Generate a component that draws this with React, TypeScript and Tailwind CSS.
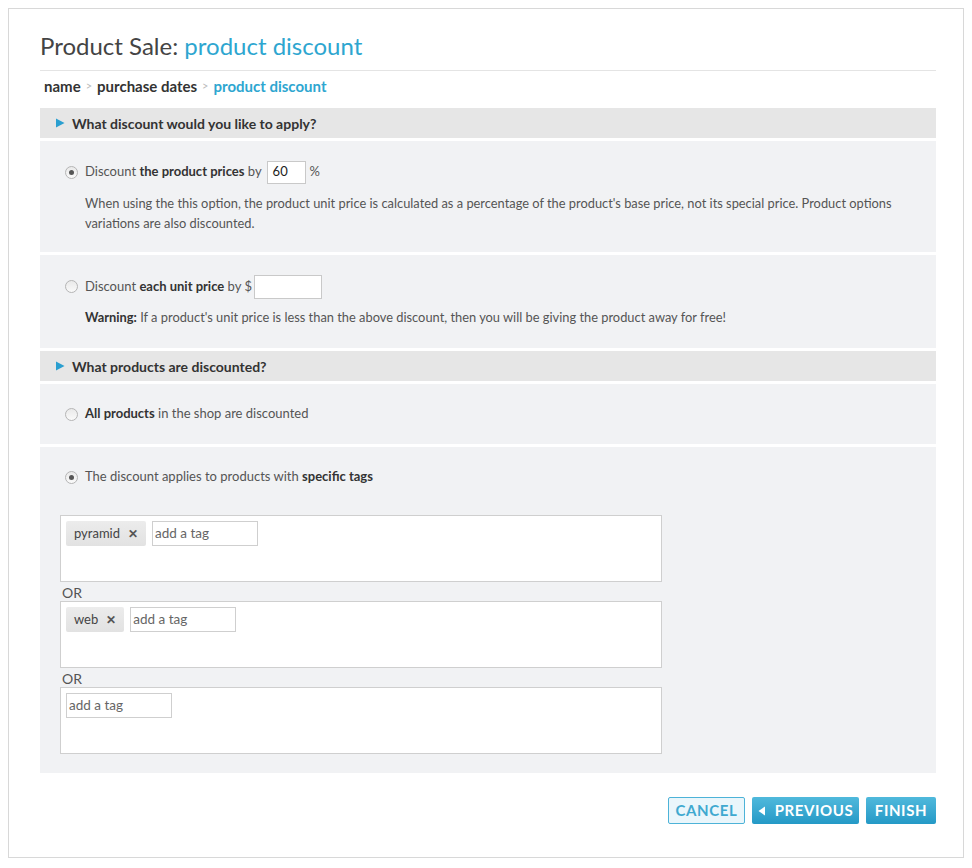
import { useState } from 'react'

const Radio = ({ checked }: { checked: boolean }) => (
  <span className="relative inline-flex h-[13px] w-[13px] shrink-0 items-center justify-center rounded-full border border-[#b5b5b5] bg-gradient-to-b from-[#e9e9e9] to-[#fafafa]">
    {checked && <span className="h-[5px] w-[5px] rounded-full bg-[#555]" />}
  </span>
)

const SectionHeader = ({ title }: { title: string }) => (
  <div className="flex h-[30px] items-center bg-[#e6e6e6] pl-[15px] text-[14px] font-bold text-[#333]">
    <svg width="10" height="10" viewBox="0 0 10 10" className="mr-[7px]">
      <path d="M1 0.5 L9.5 5 L1 9.5 Z" fill="#2a9fd0" />
    </svg>
    {title}
  </div>
)

const TagBox = ({ tags }: { tags: string[] }) => (
  <div className="h-[67px] w-[602px] border border-[#cfcfcf] bg-white px-[5px] pt-[5px]">
    <div className="flex gap-[6px]">
      {tags.map((t) => (
        <span
          key={t}
          className="flex h-[25px] items-center rounded-[2px] bg-gradient-to-b from-[#ececec] to-[#e2e2e2] pl-[8px] pr-[8px] text-[13px] text-[#444]"
        >
          {t}
          <span className="ml-[8px] text-[12px] font-bold text-[#555]">✕</span>
        </span>
      ))}
      <span className="flex h-[25px] w-[106px] items-center border border-[#cfcfcf] px-[2px] text-[13.5px] text-[#666]">
        add a tag
      </span>
    </div>
  </div>
)

export default function App() {
  const [percent] = useState('60')

  return (
    <div className="min-h-[868px] bg-white font-['Lato',sans-serif] text-[#444]">
      <div className="ml-[8px] mt-[8px] h-[850px] w-[956px] border border-[#d8d8d8] pl-[31px] pr-[27px] pt-[20px]">
        <h1 className="pb-[7px] text-[24px] leading-[34px] text-[#444]">
          Product Sale: <span className="text-[#2ea6d0]">product discount</span>
        </h1>
        <div className="h-px bg-[#e4e4e4]" />
        <div className="mb-[12px] mt-[5px] flex h-[20px] items-center pl-[4px] text-[15px] font-bold text-[#333]">
          name
          <span className="mx-[5px] text-[11px] font-normal text-[#bbb]">&gt;</span>
          purchase dates
          <span className="mx-[5px] text-[11px] font-normal text-[#bbb]">&gt;</span>
          <span className="text-[#2ea6d0]">product discount</span>
        </div>

        <div className="flex flex-col gap-[3px]">
          <SectionHeader title="What discount would you like to apply?" />

          <div className="h-[111px] bg-[#f1f2f4] pl-[25px] pt-[20px] text-[13px] text-[#555]">
            <div className="flex h-[22px] items-center">
              <Radio checked />
              <span className="ml-[7px]">
                Discount <b className="text-[#333]">the product prices</b> by
              </span>
              <span className="ml-[5px] flex h-[23px] w-[39px] items-center border border-[#c9c9c9] bg-white px-[5px] text-[#222]">
                {percent}
              </span>
              <span className="ml-[4px]">%</span>
            </div>
            <p className="mt-[10px] w-[830px] pl-[20px] text-[12.85px] leading-[20px]">
              When using the this option, the product unit price is calculated as a percentage of the product's base
              price, not its special price. Product options variations are also discounted.
            </p>
          </div>

          <div className="h-[93px] bg-[#f1f2f4] pl-[25px] pt-[20px] text-[13px] text-[#555]">
            <div className="flex h-[23px] items-center">
              <Radio checked={false} />
              <span className="ml-[7px]">
                Discount <b className="text-[#333]">each unit price</b> by $
              </span>
              <span className="ml-[2px] h-[24px] w-[68px] border border-[#c9c9c9] bg-white" />
            </div>
            <p className="mt-[9px] pl-[20px] text-[12.85px] leading-[20px]">
              <b className="text-[#333]">Warning:</b> If a product's unit price is less than the above discount, then
              you will be giving the product away for free!
            </p>
          </div>

          <SectionHeader title="What products are discounted?" />

          <div className="flex h-[60px] items-center bg-[#f1f2f4] pl-[25px] text-[13px] text-[#555]">
            <Radio checked={false} />
            <span className="ml-[7px]">
              <b className="text-[#333]">All products</b> in the shop are discounted
            </span>
          </div>

          <div className="h-[326px] bg-[#f1f2f4] pl-[20px] pt-[21px] text-[13px] text-[#555]">
            <div className="flex h-[18px] items-center pl-[5px]">
              <Radio checked />
              <span className="ml-[7px]">
                The discount applies to products with <b className="text-[#333]">specific tags</b>
              </span>
            </div>
            <div className="mt-[29px] flex flex-col">
              <TagBox tags={['pyramid']} />
              <div className="h-[19px] pl-[2px] text-[14px] leading-[22px] text-[#555]">OR</div>
              <TagBox tags={['web']} />
              <div className="h-[19px] pl-[2px] text-[14px] leading-[22px] text-[#555]">OR</div>
              <TagBox tags={[]} />
            </div>
          </div>
        </div>

        <div className="mt-[24px] flex justify-end gap-[7px] text-[15px] font-bold tracking-[0.04em]">
          <button className="h-[27px] w-[77px] rounded-[2px] border border-[#4db3d8] bg-[#eaf6fb] text-[#3fa9d0]">
            CANCEL
          </button>
          <button className="flex h-[27px] w-[107px] items-center justify-center rounded-[2px] bg-gradient-to-b from-[#4fb9dc] to-[#2399c6] text-white">
            <svg width="8" height="10" viewBox="0 0 8 10" className="mr-[9px]">
              <path d="M7 0.5 L0.5 5 L7 9.5 Z" fill="white" />
            </svg>
            PREVIOUS
          </button>
          <button className="h-[27px] w-[70px] rounded-[2px] bg-gradient-to-b from-[#4fb9dc] to-[#2399c6] text-white">
            FINISH
          </button>
        </div>
      </div>
    </div>
  )
}
